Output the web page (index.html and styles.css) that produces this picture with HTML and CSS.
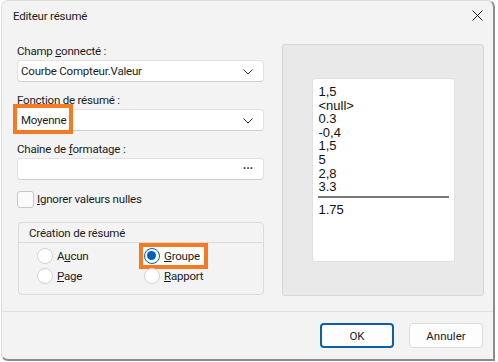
FILE: index.html
```html
<!DOCTYPE html>
<html lang="fr">
<head>
    <meta charset="UTF-8">
    <title>Editeur résumé</title>
    <link rel="stylesheet" href="styles.css">
</head>
<body>
    <div class="dialog">
        <div class="titlebar">
            <span class="title">Editeur résumé</span>
            <svg class="close" width="11" height="11" viewBox="0 0 11 11">
                <path d="M0.5 0.5 L10.5 10.5 M10.5 0.5 L0.5 10.5" stroke="#1a1a1a" stroke-width="1"/>
            </svg>
        </div>

        <div class="content">
            <div class="form">
                <label class="label">Champ <u>c</u>onnecté :</label>
                <div class="combo">
                    <span>Courbe Compteur.Valeur</span>
                    <svg class="chevron" width="10" height="6" viewBox="0 0 10 6"><path d="M0.5 0.5 L5 5 L9.5 0.5" fill="none" stroke="#333" stroke-width="1"/></svg>
                </div>

                <label class="label">Fonction de résumé :</label>
                <div class="combo">
                    <span class="mark mark-func"></span>
                    <span class="combo-text">Moyenne</span>
                    <svg class="chevron" width="10" height="6" viewBox="0 0 10 6"><path d="M0.5 0.5 L5 5 L9.5 0.5" fill="none" stroke="#333" stroke-width="1"/></svg>
                </div>

                <label class="label">Chaîne de <u>f</u>ormatage :</label>
                <div class="combo">
                    <span></span>
                    <span class="dots">···</span>
                </div>

                <div class="check-row">
                    <span class="checkbox"></span>
                    <span><u>I</u>gnorer valeurs nulles</span>
                </div>

                <div class="group">
                    <div class="group-head">Création de résumé</div>
                    <div class="radios">
                        <div class="radio"><span class="dot"></span><span>A<u>u</u>cun</span></div>
                        <div class="radio picked">
                            <span class="mark mark-radio"></span>
                            <span class="dot on"></span><span class="radio-text"><u>G</u>roupe</span>
                        </div>
                        <div class="radio"><span class="dot"></span><span><u>P</u>age</span></div>
                        <div class="radio"><span class="dot"></span><span><u>R</u>apport</span></div>
                    </div>
                </div>
            </div>

            <div class="preview">
                <div class="sheet">
                    <div>1,5</div>
                    <div>&lt;null&gt;</div>
                    <div>0.3</div>
                    <div>-0,4</div>
                    <div>1,5</div>
                    <div>5</div>
                    <div>2,8</div>
                    <div>3.3</div>
                    <div class="rule"></div>
                    <div>1.75</div>
                </div>
            </div>
        </div>

        <div class="footer">
            <button class="btn primary">OK</button>
            <button class="btn">Annuler</button>
        </div>
    </div>
</body>
</html>
```

FILE: styles.css
```css
body {
    margin: 0;
    background: #ffffff;
    font-family: Roboto, "Noto Sans", sans-serif;
    font-size: 11.5px;
    letter-spacing: -0.2px;
    color: #1b1b1b;
}
.dialog {
    position: relative;
    width: 494px;
    height: 361px;
    margin-left: 1px;
    background: #f3f3f3;
    border: 1px solid #dcdcdc;
    border-right: 2px solid #8c8c8c;
    border-bottom: 2px solid #8c8c8c;
    border-radius: 7px 7px 0 7px;
    box-sizing: border-box;
    display: flex;
    flex-direction: column;
}
.titlebar {
    height: 29px;
    display: flex;
    align-items: center;
    justify-content: space-between;
    padding: 0 10px 0 11px;
}
.close {
    margin-top: -1px;
}
.content {
    flex: 1;
    display: flex;
    gap: 18px;
    padding: 13px 0 0 15px;
    border-bottom: 1px solid #e1e1e1;
}
.form {
    width: 247px;
    display: flex;
    flex-direction: column;
}
.label {
    display: block;
    height: 16px;
    line-height: 17px;
    margin-bottom: 1px;
}
.combo {
    position: relative;
    height: 20px;
    background: #ffffff;
    border: 1px solid #e2e2e2;
    border-bottom-color: #cfcfcf;
    border-radius: 4px;
    display: flex;
    align-items: center;
    justify-content: space-between;
    padding: 0 10px 0 3px;
    margin-bottom: 10px;
}
.combo-text {
    position: relative;
}
.chevron {
    margin-top: 1px;
}
.dots {
    font-size: 12px;
    font-weight: bold;
    color: #333;
}
.mark {
    position: absolute;
    border: 4px solid #f57a21;
    background: #ffffff;
}
.mark-func {
    left: -5px;
    top: -6px;
    width: 52px;
    height: 22px;
}
.check-row {
    display: flex;
    align-items: center;
    gap: 3px;
    height: 18px;
}
.checkbox {
    width: 15px;
    height: 15px;
    background: #fbfbfb;
    border: 1px solid #c6c6c6;
    border-radius: 3px;
}
.group {
    margin-top: 14px;
    margin-left: 1px;
    border: 1px solid #dadada;
    border-radius: 4px;
    height: 71px;
}
.group-head {
    height: 19px;
    line-height: 20px;
    padding-left: 10px;
    border-bottom: 1px solid #dadada;
}
.radios {
    display: grid;
    grid-template-columns: 107px 100px;
    grid-auto-rows: 20px;
    padding: 3px 0 0 18px;
}
.radio {
    position: relative;
    display: flex;
    align-items: center;
    gap: 4px;
}
.dot {
    position: relative;
    box-sizing: border-box;
    width: 16px;
    height: 16px;
    border-radius: 50%;
    background: #ffffff;
    border: 1px solid #d4d4d4;
}
.dot.on {
    border: 1.5px solid #005fb8;
}
.dot.on::after {
    content: "";
    position: absolute;
    left: 2px;
    top: 2px;
    width: 9px;
    height: 9px;
    border-radius: 50%;
    background: #005fb8;
}
.radio-text {
    position: relative;
}
.mark-radio {
    left: -5px;
    top: -3px;
    width: 61px;
    height: 18px;
}
.preview {
    width: 202px;
    height: 252px;
    margin-top: 1px;
    background: #e9e9e9;
    border: 1px solid #d6d6d6;
    border-radius: 3px;
    display: flex;
    justify-content: center;
    padding-top: 33px;
    box-sizing: border-box;
}
.sheet {
    width: 143px;
    height: 184px;
    background: #ffffff;
    border: 1px solid #e0e0e0;
    border-radius: 3px;
    box-sizing: border-box;
    padding: 6px 5px 0 6px;
    font-family: "Liberation Sans", Arial, sans-serif;
    font-size: 13px;
    letter-spacing: 0;
    line-height: 13.6px;
    color: #111;
}
.rule {
    height: 2px;
    background: #7a7a7a;
    margin: 2px 0 5px -1px;
}
.footer {
    height: 47px;
    display: flex;
    justify-content: flex-end;
    align-items: flex-start;
    gap: 15px;
    padding: 11px 10px 0 0;
    box-sizing: border-box;
}
.btn {
    width: 74px;
    height: 25px;
    background: #fdfdfd;
    border: 1px solid #dcdcdc;
    border-radius: 4px;
    font-family: Roboto, "Noto Sans", sans-serif;
    font-size: 11.5px;
    color: #1b1b1b;
    padding: 0;
}
.btn.primary {
    border: 2px solid #0f5fa8;
}
```
